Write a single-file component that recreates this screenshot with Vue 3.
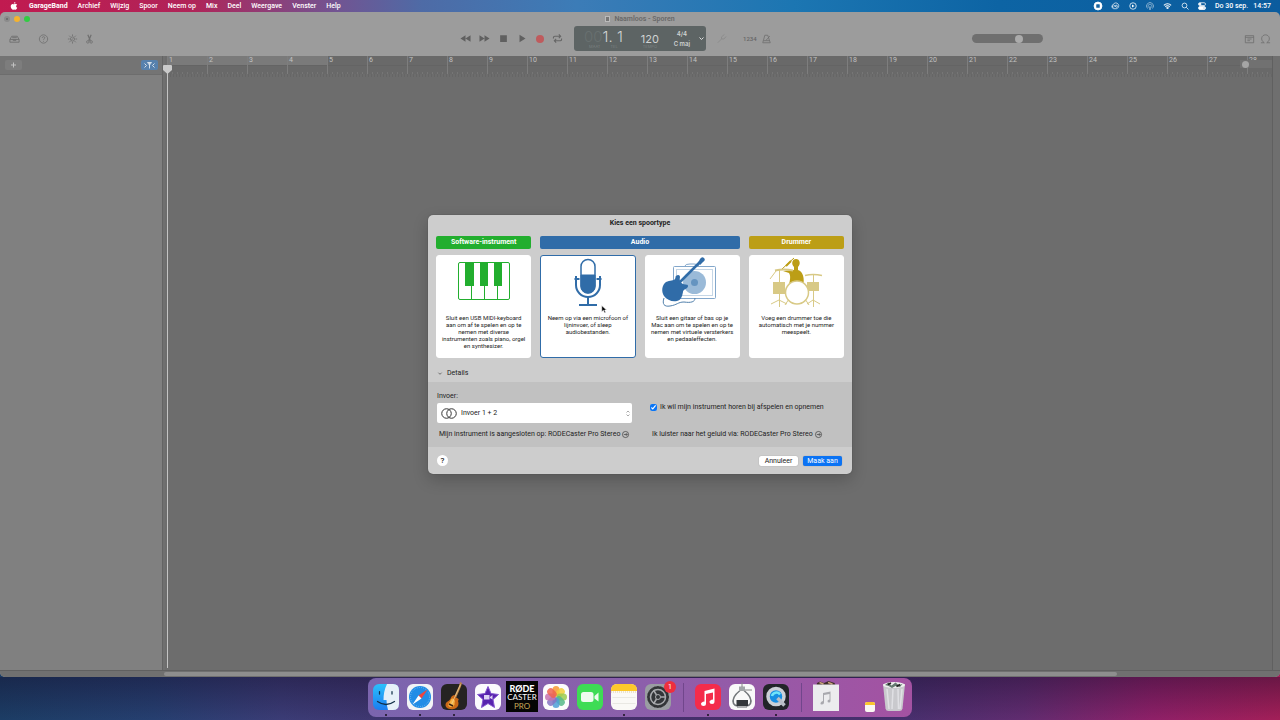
<template>
  <div class="desktop">
    <header class="menubar">
      <svg class="apple" viewBox="0 0 16 18">
        <path d="M11 0c.2 2-1.500 3.800-3.300 3.800C7.500 2 9.200.2 11 0zM8 5c1 0 1.800-.8 3.400-.8 1.300 0 2.600.7 3.400 1.900-3 1.800-2.400 5.700.5 6.900-.8 2-2.200 4.500-3.800 4.500-1.200 0-1.600-.8-3.100-.8s-2 .8-3.100.8C3 17.500.6 13.400.6 9.800c0-3.400 2.100-5.500 4.300-5.500C6.300 4.300 7.200 5 8 5z" />
      </svg>
      <nav class="menus">
        <a v-for="item in menus" :key="item" href="#" :class="{ app: item === 'GarageBand' }">{{ item }}</a>
      </nav>
      <div class="status">
        <svg viewBox="0 0 16 16"><circle cx="8" cy="8" r="8" fill="#fff" /><rect x="4.500" y="4.500" width="7" height="7" rx="1" fill="#17639f" stroke="none" /></svg>
        <svg class="wide" viewBox="0 0 20 16"><path d="M6 14a5 5 0 0 1-1-9.500A6.500 6.500 0 1 1 12 14z" /><path d="M6 11a2.500 2.500 0 1 1 2-4l4 4a2.500 2.500 0 1 0-1-5L8 10" /></svg>
        <svg viewBox="0 0 16 16"><circle cx="8" cy="8" r="6.500" /><path d="M6 5l5 3-5 3z" fill="#fff" stroke="none" /></svg>
        <svg viewBox="0 0 16 16" class="dim"><path d="M3 13A7 7 0 1 1 13 13M5 11a4 4 0 1 1 6 0M7 15l1-6 1 6z" /></svg>
        <svg class="wide" viewBox="0 0 20 16"><path d="M2 6.500a11 11 0 0 1 16 0M5 9.500a7 7 0 0 1 10 0" stroke-width="2.400" /><path d="M7.500 12a4 4 0 0 1 5 0L10 14.500z" fill="#fff" /></svg>
        <svg viewBox="0 0 16 16"><circle cx="7" cy="7" r="4.800" /><path d="M10.500 10.500L15 15" /></svg>
        <svg viewBox="0 0 16 16"><rect x="1" y="1.500" width="14" height="5.500" rx="2.700" /><rect x="1" y="9" width="14" height="6" rx="3" fill="#fff" /><circle cx="4" cy="4.200" r="2" fill="#fff" /><circle cx="12" cy="12" r="1.500" fill="#17639f" /></svg>
        <span class="clock"><span>Do 30 sep.</span><span>14:57</span></span>
      </div>
    </header>

    <main class="window">
      <div class="titlebar">
        <div class="lights"><i class="close"></i><i class="min"></i><i class="max"></i></div>
        <h1><i class="doc"></i>Naamloos - Sporen</h1>
      </div>

      <div class="toolbar">
        <div class="tools">
          <button aria-label="Bibliotheek"><svg viewBox="0 0 24 20"><path d="M2 11l4-7h12l4 7v6H2zM2 11h20M9 11v2h6v-2M7 7h10" /></svg></button>
          <button class="help-tool" aria-label="Snelle hulp"><svg viewBox="0 0 24 24"><circle cx="12" cy="12" r="10" /><path d="M9 9.500c0-4 6-4 6-.5 0 2.500-3 2.500-3 5M12 16.500v2" /></svg></button>
          <button class="knob-tool" aria-label="Smart Controls"><svg viewBox="0 0 24 24"><circle cx="12" cy="12" r="5" /><path d="M12 1v4M12 19v4M1 12h4M19 12h4M4 4l3 3M17 17l3 3M20 4l-3 3M7 17l-3 3M9 15l5-5" /></svg></button>
          <button aria-label="Editors"><svg viewBox="0 0 24 24"><path d="M8 2l6 14M16 2l-6 14" stroke-width="3" /><circle cx="8" cy="19" r="3" /><circle cx="16" cy="19" r="3" /></svg></button>
          <div class="transport">
            <button aria-label="Terug"><svg viewBox="0 0 24 16"><path class="solid" d="M12 1v14L1 8zM23 1v14L12 8z" /></svg></button>
            <button aria-label="Vooruit"><svg viewBox="0 0 24 16"><path class="solid" d="M1 1v14l11-7zM12 1v14l11-7z" /></svg></button>
            <button aria-label="Stop"><svg viewBox="0 0 24 24"><path class="solid" d="M3 3h18v18H3z" /></svg></button>
            <button aria-label="Speel af"><svg viewBox="0 0 24 24"><path class="solid" d="M4 2v20l16-10z" /></svg></button>
            <button aria-label="Neem op"><i class="record"></i></button>
            <button aria-label="Herhaal"><svg viewBox="0 0 24 20"><path d="M3 10V8q0-3 3-3h13M15 1l4 4-4 4M21 10v2q0 3-3 3H5M9 11l-4 4 4 4" stroke-width="2.500" /></svg></button>
          </div>
        </div>

        <div class="lcd">
          <div class="position"><b><s>00</s>1. 1</b><small><span>MAAT</span><span>TEL</span></small></div>
          <div class="tempo"><b>120</b><small>TEMPO</small></div>
          <div class="signature"><span>4/4</span><span>C maj</span></div>
          <svg class="chev" viewBox="0 0 10 6"><path d="M1 1l4 4 4-4" /></svg>
        </div>

        <div class="tools right">
          <button class="faint" aria-label="Stemapparaat"><svg viewBox="0 0 24 24"><path d="M3 21L13 11M12 12V7l7-6M13 12h5l5-6" /></svg></button>
          <button class="count" aria-label="Aftellen">1234</button>
          <button aria-label="Metronoom"><svg viewBox="0 0 24 24"><path d="M8 3h7l6 18H3zM5 16h14M11 15L20 5" /></svg></button>
          <input class="volume" type="range" min="0" max="100" value="69" aria-label="Hoofdvolume">
          <button aria-label="Notities"><svg viewBox="0 0 24 24"><path d="M2 4h20v17H2zM2 8h20M7 12h10M7 16h6" /></svg></button>
          <button class="last" aria-label="Loops"><svg viewBox="0 0 24 24"><path d="M1 21h8C-2 14 3 2 12 2s14 12 3 19h8" /></svg></button>
        </div>
      </div>

      <div class="workspace">
        <aside class="tracks">
          <div class="tracks-head">
            <button class="add" aria-label="Nieuw spoor"><svg viewBox="0 0 17 10"><path d="M8.500 2.500v5M6 5h5" /></svg></button>
            <button class="catch" aria-label="Volg afspeelkop"><svg viewBox="0 0 34 20"><path d="M7 7l4 4-4 4M27 7l-4 4 4 4M13 5h8l-4 5zM17 6v11" /></svg></button>
          </div>
        </aside>
        <section class="timeline">
          <div class="ruler">
            <div class="cycle"></div>
            <span v-for="n in 28" :key="n" class="bar">{{ n }}</span>
            <input class="zoom" type="range" min="0" max="100" value="8" aria-label="Zoom">
          </div>
          <div class="subruler"></div>
          <div class="playhead"><svg viewBox="0 0 9 9"><path d="M0 1q0-1 1-1h7q1 0 1 1v4L4.500 9 0 5z" /></svg></div>
        </section>
        <div class="vscroll"></div>
      </div>
      <div class="hscroll"><div class="thumb"></div></div>

      <div class="overlay">
        <form class="dialog" role="dialog" aria-label="Kies een spoortype" @submit.prevent>
          <h2>Kies een spoortype</h2>
          <div class="types">
            <div class="tab green">Software-instrument</div>
            <div class="tab blue">Audio</div>
            <div class="tab gold">Drummer</div>

            <button
              v-for="card in cards"
              :key="card.id"
              type="button"
              class="card"
              :class="{ selected: selected === card.id }"
              @click="selected = card.id"
            >
              <svg v-if="card.id === 'software'" viewBox="0 0 60 52">
                <rect x="4.500" y="5.500" width="51" height="37" rx="1.500" fill="#fff" stroke="#22ae2e" />
                <path d="M17.500 28v14M30.500 28v14M43.500 28v14" stroke="#22ae2e" />
                <path d="M11 5h9v24h-9zM26 5h8v24h-8zM40 5h8v24h-8z" fill="#22ae2e" />
              </svg>
              <svg v-else-if="card.id === 'mic'" viewBox="0 0 60 52" fill="none" stroke="#306ca8">
                <path d="M23 18v11a7 7 0 0 0 14 0V18z" fill="#306ca8" />
                <rect x="23" y="2.500" width="14" height="33.500" rx="7" stroke-width="1.500" />
                <path d="M18 19v9a12 12 0 0 0 24 0v-9" stroke-width="2" />
                <path d="M16.500 22h5M38.500 22h5M30 40v8" stroke-width="2" />
                <path d="M21 48h18" stroke-width="2" />
              </svg>
              <svg v-else-if="card.id === 'guitar'" viewBox="0 0 60 52" fill="none">
                <rect x="11.500" y="9.500" width="42" height="32" rx="1" stroke="#83a7cb" />
                <rect x="14.500" y="12.500" width="36" height="26" stroke="#c5d6e6" />
                <path d="M23 9q0-2 5-2h4q4 0 5 2" stroke="#83a7cb" />
                <circle cx="32.500" cy="25.500" r="11.500" fill="#9abad8" />
                <circle cx="32.500" cy="25.500" r="3.500" fill="#6594c0" />
                <path d="M2 41c-2 6 0 9 6 8 7-1 8-4 14-4 7 1 11 0 11-4" stroke="#507fab" />
                <path d="M14 29L38 5" stroke="#306ca8" stroke-width="2.500" />
                <path d="M36 6l2-4q2-3 4-1t-1 4l-3 3z" fill="#306ca8" />
                <path d="M14 19c2-2 4-1 4 1-1 4 1 6 3 7 3 1 5 0 5 2 0 3-5 3-5 6-1 5-2 8-6 9-5 1-10-1-13-5-3-5-2-11 2-14 4-2 8-1 9-3s0-2 1-3z" fill="#306ca8" />
              </svg>
              <svg v-else viewBox="0 0 60 52" fill="none" stroke="#d8c985">
                <path d="M13.500 12v38M13 43l-8 4M13 43l8 4M47.500 18v32M47 43l-6 4M47 43l7 4M10 14L4 22" />
                <path d="M23 42l-4 6M39 42l4 6" />
                <path d="M7 25h12v12H7zM41 25h12v9H41z" fill="#d8c985" stroke="none" />
                <path d="M39 18.500q8-2 17 0" stroke-width="1.500" />
                <path d="M23 28c1-5 2-9 0-12l-6-2 11-1V10c-3-3-2-8 2-8s5 5 2 8v3c5 1 7 9 5 16z" fill="#bc9e16" stroke="none" />
                <path d="M28 1L16 12" stroke="#bc9e16" />
                <path d="M25 4l-5 5" stroke="#bc9e16" stroke-width="2" />
                <path d="M9 13.500q9-2 18 0" stroke-width="2" />
                <circle cx="31" cy="35.500" r="11.500" fill="#fff" stroke-width="1.500" />
              </svg>
              <span><template v-for="line in card.lines" :key="line">{{ line }}<br></template></span>
            </button>
          </div>

          <button type="button" class="disclosure"><svg viewBox="0 0 10 6"><path d="M1 1l4 4 4-4" /></svg>Details</button>

          <div class="details">
            <div class="col">
              <label for="input-source">Invoer:</label>
              <div class="select">
                <svg viewBox="0 0 32 22"><circle cx="11" cy="11" r="9.500" /><circle cx="21" cy="11" r="9.500" /></svg>
                <select id="input-source"><option>Invoer 1 + 2</option></select>
                <svg class="arrows" viewBox="0 0 8 14"><path d="M1 5l3-3 3 3M1 9l3 3 3-3" /></svg>
              </div>
              <a href="#">Mijn instrument is aangesloten op: RODECaster Pro Stereo<svg viewBox="0 0 16 16"><circle cx="8" cy="8" r="7" /><path d="M4 8h8M9 5l3 3-3 3" /></svg></a>
            </div>
            <div class="col">
              <label class="check"><input v-model="monitor" type="checkbox">Ik wil mijn instrument horen bij afspelen en opnemen</label>
              <a href="#">Ik luister naar het geluid via: RODECaster Pro Stereo<svg viewBox="0 0 16 16"><circle cx="8" cy="8" r="7" /><path d="M4 8h8M9 5l3 3-3 3" /></svg></a>
            </div>
          </div>

          <footer>
            <button type="button" class="help">?</button>
            <button type="button" class="push">Annuleer</button>
            <button type="submit" class="push primary">Maak aan</button>
          </footer>
          <svg class="cursor" viewBox="0 0 10 16"><path d="M1 1v11l3-2.500L6 14l2-1-2-4h3.500z" /></svg>
        </form>
      </div>
    </main>

    <div class="dock-area">
      <div class="dock">
        <div class="app-icon running">
          <svg viewBox="0 0 52 52">
            <defs><linearGradient id="finder" x2="0" y2="1"><stop stop-color="#2cc0fb" /><stop offset="1" stop-color="#1c7df0" /></linearGradient></defs>
            <rect width="52" height="52" rx="12" fill="url(#finder)" />
            <path d="M28 0h12q12 0 12 12v28q0 12-12 12H30q-3-9-3-20h-6q0-18 7-32z" fill="#e6f0f8" />
            <path d="M13 15v5M38 15v5M9 35q17 12 34 0" fill="none" stroke="#123048" stroke-width="2.500" stroke-linecap="round" />
          </svg>
        </div>
        <div class="app-icon running">
          <svg viewBox="0 0 52 52">
            <rect width="52" height="52" rx="12" fill="#f2f4f6" />
            <circle cx="26" cy="26" r="22" fill="#218de6" />
            <circle cx="26" cy="26" r="19" fill="none" stroke="#a9d5f8" stroke-width="2" stroke-dasharray="1 3" />
            <path d="M41 11L23 23l6 6z" fill="#f0453c" /><path d="M11 41l18-12-6-6z" fill="#fff" />
          </svg>
        </div>
        <div class="app-icon running">
          <svg viewBox="0 0 52 52">
            <rect width="52" height="52" rx="12" fill="#252322" />
            <path d="M38-4l4 2-2 7-10 23-4-2L36 4z" fill="#b98447" />
            <path d="M24 23c3-3 6 0 5 4 6 2 8 3 5 7 3 8-1 15-9 16-10 2-19-4-15-12 2-4 6-3 8-7 2-3 2-6 6-8z" fill="#cc6a17" />
            <path d="M22 29c5 0 7 5 5 9 1 5-3 8-7 8-5 0-7-4-4-8 3-3 3-8 6-9z" fill="#f7b443" />
            <path d="M20 43L39 1" stroke="#f1d69c" stroke-width="1.500" /><path d="M16 40l8 4" stroke="#3a2110" stroke-width="3" />
          </svg>
        </div>
        <div class="app-icon">
          <svg viewBox="0 0 52 52">
            <rect width="52" height="52" rx="12" fill="#fbfbfd" />
            <path d="M26 5l6 14 15 2-11 10 3 16-13-8-13 8 3-16L5 21l15-2z" fill="#5723ae" stroke="#8455d0" stroke-width="2" stroke-linejoin="round" />
            <path d="M18 22h11v9H18zM30 26l5-4v9l-5-3z" fill="#ddd2f5" />
          </svg>
        </div>
        <div class="app-icon"><div class="rode"><b>RØDE</b><span>CASTER</span><em>PRO</em></div></div>
        <div class="app-icon">
          <svg viewBox="0 0 52 52">
            <rect width="52" height="52" rx="12" fill="#fcfcfc" />
            <rect v-for="(c, i) in petals" :key="c" x="19" y="4" width="14" height="21" rx="7" :fill="c" fill-opacity="0.850" :transform="`rotate(${i * 45} 26 26)`" />
          </svg>
        </div>
        <div class="app-icon">
          <svg viewBox="0 0 52 52">
            <rect width="52" height="52" rx="12" fill="#3edc55" />
            <rect x="8" y="16" width="25" height="20" rx="5" fill="#eefbef" /><path d="M35 24l8-7v18l-8-6z" fill="#eefbef" />
          </svg>
        </div>
        <div class="app-icon running">
          <svg viewBox="0 0 52 52">
            <rect width="52" height="52" rx="12" fill="#faf9f6" />
            <path d="M0 14v-2Q0 0 12 0h28q12 0 12 12v2z" fill="#fdc92c" />
            <path d="M0 16h52" stroke="#c5a24e" stroke-dasharray="2 2" /><path d="M3 27h46M3 39h46" stroke="#d8d6d1" />
          </svg>
        </div>
        <div class="app-icon">
          <svg viewBox="0 0 52 52" fill="none">
            <rect width="52" height="52" rx="12" fill="#9a9da2" />
            <circle cx="26" cy="26" r="21" fill="#333639" stroke="#222" stroke-width="2" stroke-dasharray="2 1" />
            <circle cx="26" cy="26" r="15" stroke="#a9abae" stroke-width="3" />
            <circle cx="26" cy="26" r="5" stroke="#a9abae" stroke-width="2" />
            <path d="M31 26h11M23 22l-6-10M23 30l-6 10" stroke="#a9abae" stroke-width="3" />
          </svg>
          <span class="badge">1</span>
        </div>
        <i class="sep"></i>
        <div class="app-icon running">
          <svg viewBox="0 0 52 52">
            <rect width="52" height="52" rx="12" fill="#f42c4b" />
            <path d="M19 14l20-5v26q0 5-5 5t-5-4 7-5V17l-14 3v19q0 5-5 5t-5-4 7-5z" fill="#fff" />
          </svg>
        </div>
        <div class="app-icon">
          <svg viewBox="0 0 52 52" fill="none">
            <rect width="52" height="52" rx="12" fill="#f9f9f9" />
            <path d="M22 13C12 21 6 31 9 39q3 5 8 5M30 13c10 8 16 18 13 26q-3 5-8 5" stroke="#73777a" stroke-width="3" />
            <path d="M20 5h12v9H20z" fill="#a2a6a8" /><path d="M26-3v9M32 12h14" stroke="#888" stroke-width="2" />
            <rect x="15" y="32" width="23" height="12" fill="#34383b" /><path d="M17 46h20" stroke="#34383b" stroke-width="3" stroke-dasharray="2 2" />
          </svg>
        </div>
        <div class="app-icon running">
          <svg viewBox="0 0 52 52" fill="none">
            <rect width="52" height="52" rx="12" fill="#222429" />
            <circle cx="26" cy="25" r="16" fill="#168ee2" stroke="#cbd0d6" stroke-width="7" />
            <path d="M18 24a9 9 0 0 1 16-3" stroke="#6fe4fa" stroke-width="5" /><path d="M29 28l14 15" stroke="#b9bec6" stroke-width="7" />
          </svg>
        </div>
        <i class="sep"></i>
        <div class="app-icon">
          <svg viewBox="0 0 52 52">
            <path d="M8-2l6-3 8 3 9-4 12 4 3 6H7z" fill="#3d2d29" /><path d="M13-3l8 3M30-3l9 3" stroke="#c9a27c" stroke-width="3" />
            <path d="M0 1h52v53H0z" fill="#ececee" />
            <path d="M20 18l15-3v19q0 3-3 3t-3-3 4-3V20l-11 2v15q0 4-4 4t-3-3 5-4z" fill="#a9a9ae" />
          </svg>
        </div>
        <div class="app-icon mini"><svg viewBox="0 0 20 20"><rect width="20" height="20" rx="4" fill="#faf8f2" /><path d="M0 6V4q0-4 4-4h12q4 0 4 4v2z" fill="#fbc52d" /></svg></div>
        <div class="app-icon">
          <svg class="trash" viewBox="0 0 52 60">
            <path d="M4 4h44l-5 49q-1 5-6 5H15q-5 0-6-5z" fill="#c9c9cd" />
            <path d="M12 14l4 40M24 14l-2 40M34 14l1 40M42 14l-4 40" stroke="#e0e0e4" stroke-width="3" />
            <ellipse cx="26" cy="6" rx="22" ry="6" fill="#f0f0f0" />
            <path d="M8 6l7-5 6 6 8-6 6 5 8-2-5 6-9-2-7 4-7-4z" fill="#667b72" /><path d="M14 5l6-3M31 9l7-4" stroke="#222" stroke-width="3" />
          </svg>
        </div>
      </div>
    </div>
  </div>
</template>

<script setup>
import { ref } from 'vue';

const menus = ['GarageBand', 'Archief', 'Wijzig', 'Spoor', 'Neem op', 'Mix', 'Deel', 'Weergave', 'Venster', 'Help'];

const cards = [
  { id: 'software', lines: ['Sluit een USB MIDI-keyboard', 'aan om af te spelen en op te', 'nemen met diverse', 'instrumenten zoals piano, orgel', 'en synthesizer.'] },
  { id: 'mic', lines: ['Neem op via een microfoon of', 'lijninvoer, of sleep', 'audiobestanden.'] },
  { id: 'guitar', lines: ['Sluit een gitaar of bas op je', 'Mac aan om te spelen en op te', 'nemen met virtuele versterkers', 'en pedaaleffecten.'] },
  { id: 'drummer', lines: ['Voeg een drummer toe die', 'automatisch met je nummer', 'meespeelt.'] },
];

const petals = ['#f79a31', '#f2ce3a', '#9bcb50', '#57b98a', '#4c9ed6', '#8573c2', '#c772b0', '#ee6350'];

const selected = ref('mic');
const monitor = ref(true);
</script>

<style>
body {
  margin: 0;
}
</style>

<style scoped>
* {
  box-sizing: border-box;
}

button,
select,
input {
  margin: 0;
  padding: 0;
  border: 0;
  background: none;
  font: inherit;
  color: inherit;
}

a {
  color: inherit;
  text-decoration: none;
}

svg {
  display: block;
  overflow: visible;
}

.desktop {
  display: flex;
  flex-direction: column;
  min-height: 100vh;
  font-family: Roboto, "Liberation Sans", sans-serif;
  font-size: 7px;
  line-height: 8px;
  color: #222;
  background:
    linear-gradient(90deg, #c11a50 0, #b02458 15%, #735391 26%, #4e6ba6 33%, #3c7cb7 45%, #1c76b2 62%, #0d64a4 78%, #0b5c9e 100%) top / 100% 30px no-repeat,
    linear-gradient(rgba(20, 10, 40, 0.4), transparent) bottom / 100% 43px no-repeat,
    linear-gradient(90deg, #1c3d65 0, #263f70 12%, #3b3c76 22%, #45306a 40%, #46306e 70%, #612c70 80%, #8f2068 90%, #a31f58 100%);
}

/* menu bar */
.menubar {
  display: flex;
  align-items: center;
  height: 12px;
  padding: 0 9px 0 10px;
  color: #fff;
  font-weight: 500;
}

.apple {
  width: 8px;
  height: 8px;
  fill: #fff;
}

.menus {
  display: flex;
  gap: 10px;
  margin-left: 11px;
}

.menus .app {
  font-weight: 700;
}

.status {
  display: flex;
  align-items: center;
  gap: 9px;
  margin-left: auto;
}

.status svg {
  width: 8px;
  height: 8px;
  fill: none;
  stroke: #fff;
  stroke-width: 1.5;
}

.status svg.wide {
  width: 9px;
}

.status .dim {
  opacity: 0.6;
}

.clock {
  display: flex;
  gap: 5px;
}

/* window */
.window {
  position: relative;
  display: flex;
  flex: 1;
  flex-direction: column;
  overflow: hidden;
  border-radius: 5px;
  background: #9c9c9c;
}

.titlebar {
  display: grid;
  grid-template-columns: 1fr auto 1fr;
  align-items: center;
  height: 14px;
  padding: 0 4px;
}

.lights {
  display: flex;
  gap: 4px;
}

.lights i {
  width: 6px;
  height: 6px;
  border-radius: 50%;
}

.close {
  border: 2px solid #8b8b8b;
  background: #666;
}

.min {
  background: #f4b32f;
}

.max {
  background: #32cc43;
}

.titlebar h1 {
  display: flex;
  align-items: center;
  gap: 4px;
  margin: 0;
  font-size: 7px;
  font-weight: 600;
  color: #686868;
}

.doc {
  width: 5px;
  height: 6px;
  border: 1px solid #bbb;
  background: #777;
}

.toolbar {
  display: grid;
  grid-template-columns: 1fr 132px 1fr;
  height: 30px;
  align-items: start;
}

.tools {
  display: flex;
  align-items: center;
  height: 25px;
  padding: 0 6px 0 9px;
  color: #707070;
}

.tools svg {
  width: 11px;
  height: 10px;
  fill: none;
  stroke: currentColor;
  stroke-width: 2;
}

.help-tool {
  margin-left: 18px;
}

.knob-tool {
  margin: 0 6px 0 18px;
}

.tools .solid {
  fill: #606060;
  stroke: none;
}

.transport {
  display: flex;
  align-items: center;
  gap: 8px;
  margin-left: auto;
  margin-right: 5px;
  color: #666;
}

.transport svg {
  width: 11px;
  height: 9px;
}

.record {
  display: block;
  width: 8px;
  height: 8px;
  border-radius: 50%;
  background: #bf5b5d;
}

.lcd {
  display: flex;
  align-items: center;
  height: 25px;
  padding: 0 2px 0 10px;
  border-radius: 3px;
  background: #5d6464;
  color: #d0d3d3;
  font-family: Inter, sans-serif;
}

.lcd b {
  display: block;
  font-weight: 400;
}

.lcd s {
  color: #687070;
  text-decoration: none;
}

.lcd small {
  display: flex;
  justify-content: space-around;
  font-size: 4px;
  line-height: 4px;
  color: #7a8080;
}

.position b {
  font-size: 15px;
  font-weight: 300;
  line-height: 16px;
}

.tempo {
  margin-left: 18px;
}

.tempo b {
  padding-top: 4px;
  font-size: 11px;
  line-height: 12px;
}

.signature {
  display: flex;
  flex-direction: column;
  gap: 2px;
  margin-left: auto;
  font-size: 6px;
  font-weight: 600;
  text-align: center;
}

.chev {
  width: 5px;
  height: 3px;
  margin-left: 9px;
  fill: none;
  stroke: #ddd;
  stroke-width: 2;
}

.faint {
  opacity: 0.4;
}

.count {
  margin: 0 4px 0 16px;
  font-size: 6px;
  font-weight: 500;
  color: #666;
}

.tools.right {
  padding: 0 9px 0 10px;
}

.volume {
  appearance: none;
  width: 71px;
  height: 9px;
  margin: 0 201px 0 auto;
  border-radius: 5px;
  background: #6f6f6f;
}

.volume::-webkit-slider-thumb {
  appearance: none;
  width: 8px;
  height: 8px;
  border-radius: 50%;
  background: #ababab;
}

.last {
  margin-left: 5px;
}

/* tracks and timeline */
.workspace {
  display: flex;
  flex: 1;
}

.tracks {
  width: 163px;
  border-right: 1px solid #646464;
  background: #808080;
}

.tracks-head {
  display: flex;
  align-items: center;
  justify-content: space-between;
  height: 19px;
  padding: 0 4px 0 5px;
  border-bottom: 1px solid #6d6d6d;
  background: #747474;
}

.add,
.catch {
  width: 17px;
  height: 10px;
  border-radius: 2px;
}

.add {
  background: #7d7d7d;
}

.catch {
  background: #5781ad;
}

.tracks-head svg {
  width: 17px;
  height: 10px;
  fill: none;
  stroke: #d4dfe9;
  stroke-width: 2;
}

.tracks-head .add svg {
  stroke: #c2c2c2;
  stroke-width: 1;
}

.timeline {
  position: relative;
  flex: 1;
  min-width: 0;
  border-left: 2px solid #707070;
  padding-left: 2px;
  background: #6d6d6d;
}

.ruler {
  position: relative;
  display: flex;
  height: 18px;
  overflow: hidden;
  background:
    linear-gradient(#646464, #646464) 0 9px / 100% 1px no-repeat,
    repeating-linear-gradient(90deg, #767676 0 1px, transparent 1px 5px) 0 100% / 100% 2px no-repeat,
    #696969;
}

.cycle {
  position: absolute;
  top: 0;
  left: 0;
  width: 160px;
  height: 9px;
  background: #7a7a7a;
}

.bar {
  position: relative;
  flex: 0 0 40px;
  padding-left: 1px;
  border-left: 1px solid #7e7e7e;
  color: #c2c2c2;
}

.zoom {
  position: absolute;
  top: 4px;
  right: 0;
  appearance: none;
  width: 32px;
  height: 8px;
  background: #717171;
}

.zoom::-webkit-slider-thumb {
  appearance: none;
  width: 7px;
  height: 7px;
  border-radius: 50%;
  background: #a5a5a5;
}

.subruler {
  height: 3px;
  background: repeating-linear-gradient(90deg, #666 0 1px, transparent 1px 3px);
}

.playhead {
  position: absolute;
  top: 9px;
  bottom: 2px;
  left: 2px;
  width: 1px;
  background: #c4c4c4;
}

.playhead svg {
  width: 9px;
  height: 9px;
  margin-left: -4px;
  fill: #cacaca;
}

.vscroll {
  width: 8px;
  border-left: 1px solid #606060;
  background: #6f6f6f;
}

.hscroll {
  height: 7px;
  padding: 1px 0 2px 164px;
  border-top: 1px solid #606060;
  background: #707070;
}

.hscroll .thumb {
  width: 85.4%;
  height: 4px;
  border-radius: 2px;
  background: #8e8e8e;
}

/* dialog */
.overlay {
  position: absolute;
  inset: 0;
  display: flex;
  align-items: center;
  justify-content: center;
}

.dialog {
  position: relative;
  width: 424px;
  border-radius: 5px;
  background: #cdcdcd;
  box-shadow: 0 0 1px #333, 0 6px 16px rgba(0, 0, 0, 0.2);
}

.dialog h2 {
  margin: 0;
  padding: 4px 0 9px;
  font-size: 7px;
  font-weight: 700;
  line-height: 8px;
  text-align: center;
}

.types {
  display: grid;
  grid-template-columns: repeat(4, 1fr);
  gap: 6px 9px;
  padding: 0 8px;
}

.tab {
  border-radius: 2px;
  font-weight: 700;
  line-height: 13px;
  text-align: center;
  color: #fff;
}

.green {
  background: #22ae2e;
}

.blue {
  grid-column: span 2;
  background: #306ca8;
}

.gold {
  background: #bc9e16;
}

.card {
  display: flex;
  flex-direction: column;
  align-items: center;
  height: 103px;
  border: 1px solid #fff;
  border-radius: 3px;
  background: #fff;
  font-size: 6px;
  line-height: 7px;
  white-space: nowrap;
}

.card.selected {
  border-color: #306ca8;
}

.card svg {
  width: 60px;
  height: 52px;
  margin: 1px 0 5px;
}

.disclosure {
  display: flex;
  align-items: center;
  gap: 5px;
  height: 24px;
  padding: 6px 10px 0;
}

.disclosure svg {
  width: 4px;
  height: 3px;
  fill: none;
  stroke: #555;
  stroke-width: 2;
}

.details {
  display: grid;
  grid-template-columns: 195px 1fr;
  gap: 18px;
  height: 65px;
  padding: 10px 9px;
  background: #c1c1c1;
}

.col {
  display: flex;
  flex-direction: column;
}

.select {
  display: grid;
  grid-template-columns: 16px 1fr 4px;
  align-items: center;
  gap: 4px;
  height: 20px;
  margin: 3px 0 7px;
  padding: 0 2px 0 4px;
  border-radius: 2px;
  background: #fff;
}

.select svg {
  height: 11px;
  fill: none;
  stroke: #333;
  stroke-width: 2;
}

.select .arrows {
  height: 7px;
  stroke: #555;
  stroke-width: 1;
}

.select select {
  appearance: none;
  height: 12px;
}

.col a {
  display: flex;
  align-items: center;
  gap: 2px;
  padding-left: 2px;
  white-space: nowrap;
}

.col a svg {
  width: 7px;
  height: 7px;
  fill: none;
  stroke: #333;
  stroke-width: 1.5;
}

.check {
  display: flex;
  align-items: center;
  gap: 3px;
  margin: 11px 0 19px;
  white-space: nowrap;
}

.check input {
  width: 7px;
  height: 7px;
  accent-color: #0a75f5;
}

footer {
  display: flex;
  align-items: center;
  gap: 5px;
  height: 27px;
  padding: 0 10px 0 9px;
}

.help {
  width: 11px;
  height: 11px;
  margin-right: auto;
  border-radius: 50%;
  background: #fff;
  font-size: 8px;
  font-weight: 500;
}

.push {
  width: 39px;
  height: 10px;
  border-radius: 2px;
  background: #fff;
  box-shadow: 0 0 1px #888;
}

.primary {
  background: #0b73f4;
  color: #fff;
}

.cursor {
  position: absolute;
  top: 90px;
  left: 173px;
  width: 6px;
  height: 9px;
  stroke: #fff;
}

/* dock */
.dock-area {
  display: flex;
  justify-content: center;
  height: 43px;
  padding-top: 1px;
}

.dock {
  display: flex;
  align-items: center;
  height: 39px;
  padding: 0 1px;
  border-radius: 8px;
  background: linear-gradient(90deg, #7b65ae, #8c5fab 50%, #a452a2);
}

.app-icon {
  position: relative;
  display: flex;
  flex-direction: column;
  align-items: center;
  width: 34px;
  height: 28px;
}

.app-icon svg {
  width: 26px;
  height: 26px;
}

.app-icon .trash {
  height: 30px;
  margin-top: -2px;
}

.running::after {
  content: "";
  position: absolute;
  bottom: -4px;
  width: 2px;
  height: 2px;
  border-radius: 50%;
  background: #16101c;
}

.rode {
  display: flex;
  flex-direction: column;
  width: 32px;
  height: 32px;
  margin-top: -3px;
  padding-top: 3px;
  background: #050505;
  font-family: Lato, sans-serif;
  font-size: 8px;
  line-height: 9px;
  text-align: center;
  color: #fff;
}

.rode b {
  font-size: 9px;
  font-weight: 900;
}

.rode em {
  font-style: normal;
  color: #c9ab58;
}

.badge {
  position: absolute;
  top: -3px;
  right: -1px;
  width: 12px;
  height: 12px;
  border-radius: 50%;
  background: #ee2f3d;
  line-height: 12px;
  text-align: center;
  color: #fff;
}

.sep {
  width: 1px;
  height: 29px;
  margin: 0 7px 0 8px;
  background: #71468c;
}

.mini {
  align-items: flex-end;
  justify-content: flex-end;
  padding-right: 2px;
}

.app-icon.mini svg {
  width: 10px;
  height: 10px;
}
</style>
